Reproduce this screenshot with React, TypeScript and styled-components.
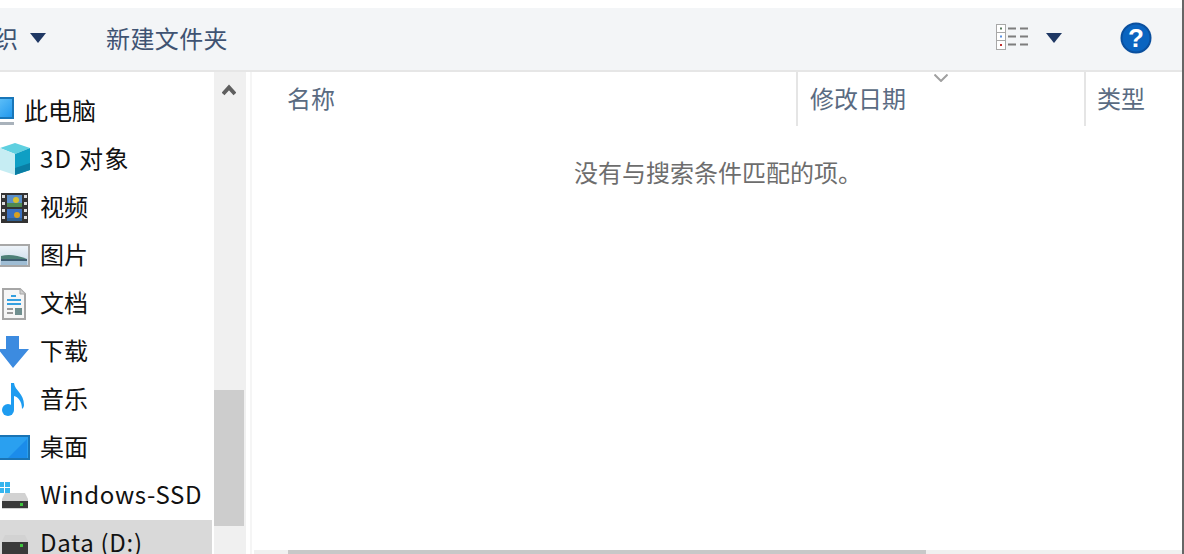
import React from "react";
import styled, { createGlobalStyle } from "styled-components";

const Global = createGlobalStyle`
  html, body { margin: 0; padding: 0; background: #fff; }
  body { width: 1184px; height: 554px; overflow: hidden; font-family: "Noto Sans CJK SC", "Liberation Sans", sans-serif; }
`;
const Page = styled.div`
  width: 1184px; height: 554px; display: flex; flex-direction: column; padding-top: 8px; box-sizing: border-box;
  border-right: 2px solid #666; overflow: hidden;
`;
const Toolbar = styled.div`
  height: 64px; box-sizing: border-box; flex: none; background: #f3f5f7; border-bottom: 2px solid #e6e6e6; display: flex; align-items: center;
  color: #3f5372; font-size: 24px; overflow: hidden;
`;
const OrgLabel = styled.span`margin-left: -6px; margin-right: 12px; padding-bottom: 4px; width: 24px; overflow: hidden; white-space: nowrap; flex: none; direction: rtl;`;
const Spacer = styled.div`flex: 1;`;
const NewFolder = styled.span`margin-left: 60px; padding-bottom: 4px; white-space: nowrap; letter-spacing: 0.4px;`;
const Body = styled.div`flex: 1; display: flex; min-height: 0;`;
const Nav = styled.div`width: 212px; margin-right: 2px; flex: none; display: flex; flex-direction: column; padding-top: 16px; overflow: hidden;`;
const NavRow = styled.div<{ $selected?: boolean }>`
  height: 48px; flex: none; display: flex; align-items: center; font-size: 24px; color: #111; white-space: nowrap;
  background: ${(p) => (p.$selected ? "#d9d9d9" : "transparent")};
`;
const NavLabel = styled.span<{ $spacing?: number; $word?: number }>`
  padding-bottom: 6px;
  letter-spacing: ${(p) => p.$spacing ?? 0}px;
  word-spacing: ${(p) => p.$word ?? 0}px;
`;
const IconSlot = styled.span<{ $w?: number }>`width: ${(p) => p.$w ?? 40}px; flex: none; display: flex; justify-content: flex-start; align-items: center;`;
const Scrollbar = styled.div`width: 32px; flex: none; background: #f0f0f0; display: flex; flex-direction: column; margin-right: 4px;`;
const ScrollUp = styled.div`height: 318px; width: 30px; flex: none; display: flex; justify-content: center; padding-top: 12px; box-sizing: border-box;`;
const Thumb = styled.div`height: 136px; width: 30px; flex: none; background: #cdcdcd;`;
const Main = styled.div`flex: 1; display: flex; flex-direction: column; min-width: 0; border-left: 2px solid #f5f5f5; position: relative;`;
const Header = styled.div`height: 54px; flex: none; display: flex; color: #5a6b82; font-size: 24px; position: relative;`;
const Col = styled.div<{ $w: number; $pad: number; $line?: boolean }>`
  width: ${(p) => p.$w}px; flex: none; box-sizing: border-box; padding-left: ${(p) => p.$pad}px; padding-top: 8px;
  white-space: nowrap; ${(p) => (p.$line ? "border-right: 2px solid #e5e5e5;" : "")}
`;
const SortMark = styled.svg`position: absolute; left: 682px; top: 2px;`;
const Content = styled.div`flex: 1; min-height: 0; padding: 28px 0 0 322px; color: #6d6d6d; font-size: 24px; white-space: nowrap;`;
const HScroll = styled.div`height: 4px; flex: none; margin-left: 2px; background: #f0f0f0; display: flex;`;
const HThumb = styled.div`margin-left: 34px; width: 638px; background: #c8c8c8;`;
const Help = styled.svg`margin: 0 30px 2px 0; flex: none;`;
const Caret = styled.svg<{ $mr?: number }>`flex: none; margin: 0 ${(p) => p.$mr ?? 0}px 2px 0;`;
const ViewIcon = styled.svg`flex: none; margin: 0 18px 4px 0;`;

const C = ({ mr = 0 }: { mr?: number }) => (
  <Caret $mr={mr} width="16" height="10" viewBox="0 0 16 10">
    <path d="M0 0h16L8 10z" fill="#1f3864" />
  </Caret>
);

const I = {
  pc: (
    <svg width="24" height="30" viewBox="0 0 24 30"><defs><linearGradient id="pcg" x1="0" y1="0" x2="1" y2="1"><stop offset="0" stopColor="#6cc8fa"/><stop offset="1" stopColor="#1e96ee"/></linearGradient></defs><rect x="-8" y="1" width="21" height="20" fill="url(#pcg)" stroke="#1976b8" strokeWidth="2"/><rect x="-6" y="25" width="20" height="3" fill="#a9b2bb"/></svg>
  ),
  d3: (
    <svg width="40" height="34" viewBox="0 0 40 34"><path d="M0 5 L15 0 L30 5 L15 11Z" fill="#5fd0e0"/><path d="M0 5 L15 11 V32 L0 27Z" fill="#c6edf3"/><path d="M15 11 L30 5 V27 L15 32Z" fill="#0f9fc4"/><path d="M15 25 L30 20 V27 L15 32Z" fill="#0a7ea4"/></svg>
  ),
  video: (
    <svg width="40" height="32" viewBox="0 0 40 32"><rect x="1" y="1" width="27" height="30" fill="#333"/><rect x="2" y="3" width="3" height="3" fill="#ddd"/><rect x="2" y="10" width="3" height="3" fill="#ddd"/><rect x="2" y="17" width="3" height="3" fill="#ddd"/><rect x="2" y="24" width="3" height="3" fill="#ddd"/><rect x="24" y="3" width="3" height="3" fill="#ddd"/><rect x="24" y="10" width="3" height="3" fill="#ddd"/><rect x="24" y="17" width="3" height="3" fill="#ddd"/><rect x="24" y="24" width="3" height="3" fill="#ddd"/><rect x="7" y="3" width="15" height="12" fill="#5a8fc8"/><circle cx="16" cy="8" r="3" fill="#d8c030"/><rect x="7" y="11" width="15" height="4" fill="#4f8a50"/><rect x="7" y="17" width="15" height="12" fill="#3a70c0"/><circle cx="17" cy="23" r="3" fill="#d8a020"/><rect x="7" y="26" width="15" height="3" fill="#2f5f90"/></svg>
  ),
  pic: (
    <svg width="40" height="24" viewBox="0 0 40 24"><defs><linearGradient id="picg" x1="0" y1="0" x2="0" y2="1"><stop offset="0" stopColor="#f0f5fa"/><stop offset="1" stopColor="#c5d8e8"/></linearGradient></defs><rect x="-1" y="1" width="30" height="21" fill="url(#picg)" stroke="#a8a8a8" strokeWidth="2"/><path d="M1 12 Q12 9 27 15 V16 H1Z" fill="#4d8078"/><rect x="1" y="15" width="26" height="2" fill="#3d5c70"/><rect x="1" y="17" width="26" height="4" fill="#9fbdd4"/></svg>
  ),
  doc: (
    <svg width="40" height="32" viewBox="0 0 40 32"><path d="M3 1 H20 L25 6 V31 H3Z" fill="#f6f6f6" stroke="#a6a6a6" strokeWidth="2"/><path d="M20 1V6H25" fill="#d0d0d0" stroke="#a6a6a6"/><path d="M11 8h5M7 12h14M7 16h14" stroke="#35a0e0" strokeWidth="2"/><path d="M7 21h6M7 25h6" stroke="#9a9a9a" strokeWidth="2"/><rect x="15" y="20" width="7" height="7" fill="#6f8f8f"/></svg>
  ),
  down: (
    <svg width="40" height="32" viewBox="0 0 40 32"><path d="M6 0 H19 V13 H29 L13 32 L-2 13 H6Z" fill="#3c8be0"/></svg>
  ),
  music: (
    <svg width="40" height="34" viewBox="0 0 40 34"><ellipse cx="8" cy="27" rx="6" ry="6" fill="#1e9cf0"/><path d="M11 0 H14 C15 8 24 10 24 22 C24 24 23 25 22 26 C22 18 18 14 14 13 V27 H11Z" fill="#1e9cf0"/></svg>
  ),
  desk: (
    <svg width="40" height="26" viewBox="0 0 40 26"><rect x="-4" y="1" width="33" height="23" fill="#2aa0f0" stroke="#1a74b4" strokeWidth="2"/><path d="M8 23 L27 4 V23Z" fill="#1b8cea"/></svg>
  ),
  win: (
    <svg width="40" height="28" viewBox="0 0 40 28"><g fill="#35b5ee"><rect x="0" y="0" width="4" height="5"/><rect x="5" y="0" width="5" height="5"/><rect x="0" y="6" width="4" height="5"/><rect x="5" y="6" width="5" height="5"/></g><path d="M5 11 H25 L28 17 V27 H2 V17Z" fill="#d2d2d2"/><rect x="2" y="19" width="26" height="7" fill="#3a3a3a"/><rect x="20" y="21" width="3" height="3" fill="#3ec43e"/></svg>
  ),
  data: (
    <svg width="40" height="26" viewBox="0 0 40 26"><path d="M5 4 H25 L28 10 V26 H2 V10Z" fill="#d2d2d2"/><rect x="2" y="11" width="26" height="15" fill="#3a3a3a"/><rect x="20" y="13" width="3" height="3" fill="#3ec43e"/></svg>
  ),
};

export default function App() {
  return (
    <Page>
      <Global />
      <Toolbar>
        <OrgLabel>织</OrgLabel>
        <C />
        <NewFolder>新建文件夹</NewFolder>
        <Spacer />
        <ViewIcon width="32" height="26" viewBox="0 0 32 26">
          <rect x="0.5" y="0.5" width="9" height="8" fill="#fff" stroke="#a8a8a8"/><rect x="0.5" y="8.5" width="9" height="8" fill="#fff" stroke="#a8a8a8"/><rect x="0.5" y="16.5" width="9" height="9" fill="#fff" stroke="#a8a8a8"/>
          <rect x="4" y="3.5" width="2" height="2" fill="#5a7a60"/><rect x="4" y="11.5" width="2" height="2" fill="#5a90e0"/><rect x="4" y="20" width="2" height="2" fill="#c03030"/>
          <path d="M12 4.5h8M24 4.5h8M12 12.5h8M24 12.5h8M12 20.5h8M24 20.5h8" stroke="#7d7d7d" strokeWidth="2"/>
        </ViewIcon>
        <C mr={58} />
        <Help width="32" height="32" viewBox="0 0 32 32">
          <circle cx="16" cy="16" r="15.5" fill="#0a4f9e"/>
          <circle cx="16" cy="16" r="13.5" fill="#0a64c0"/>
          <text x="16" y="25" textAnchor="middle" fontSize="26" fontWeight="700" fill="#fff" fontFamily="Liberation Sans">?</text>
        </Help>
      </Toolbar>
      <Body>
        <Nav>
          <NavRow><IconSlot $w={24}>{I.pc}</IconSlot><NavLabel>此电脑</NavLabel></NavRow>
          <NavRow><IconSlot>{I.d3}</IconSlot><NavLabel $spacing={1.3}>3D 对象</NavLabel></NavRow>
          <NavRow><IconSlot>{I.video}</IconSlot><NavLabel>视频</NavLabel></NavRow>
          <NavRow><IconSlot>{I.pic}</IconSlot><NavLabel>图片</NavLabel></NavRow>
          <NavRow><IconSlot>{I.doc}</IconSlot><NavLabel>文档</NavLabel></NavRow>
          <NavRow><IconSlot>{I.down}</IconSlot><NavLabel>下载</NavLabel></NavRow>
          <NavRow><IconSlot>{I.music}</IconSlot><NavLabel>音乐</NavLabel></NavRow>
          <NavRow><IconSlot>{I.desk}</IconSlot><NavLabel>桌面</NavLabel></NavRow>
          <NavRow><IconSlot>{I.win}</IconSlot><NavLabel $spacing={0.65} $word={3}>Windows-SSD (C:)</NavLabel></NavRow>
          <NavRow $selected><IconSlot>{I.data}</IconSlot><NavLabel $spacing={0.7}>Data (D:)</NavLabel></NavRow>
        </Nav>
        <Scrollbar>
          <ScrollUp>
            <svg width="14" height="12" viewBox="0 0 14 12"><path d="M1 10 L7 3.5 L13 10" fill="none" stroke="#5f5f5f" strokeWidth="4"/></svg>
          </ScrollUp>
          <Thumb />
        </Scrollbar>
        <Main>
          <Header>
            <Col $w={546} $pad={35} $line>名称</Col>
            <Col $w={288} $pad={12} $line>修改日期</Col>
            <Col $w={96} $pad={11}>类型</Col>
            <SortMark width="14" height="8" viewBox="0 0 14 8"><path d="M0.5 0.5 L7 7 L13.5 0.5" fill="none" stroke="#a0a0a0" strokeWidth="2"/></SortMark>
          </Header>
          <Content>没有与搜索条件匹配的项。</Content>
          <HScroll><HThumb /></HScroll>
        </Main>
      </Body>
    </Page>
  );
}
